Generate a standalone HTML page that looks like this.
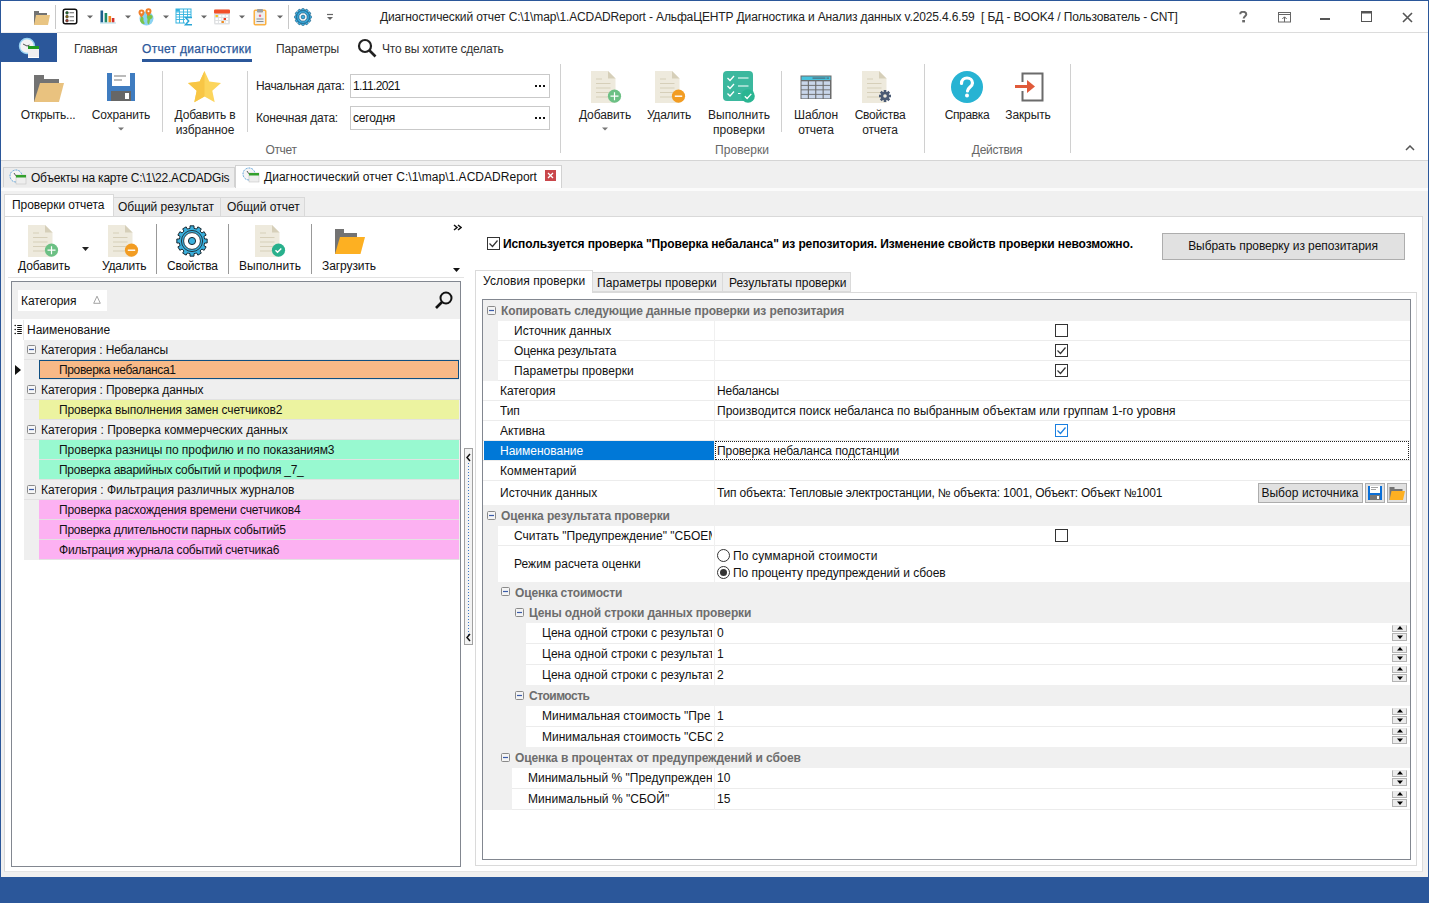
<!DOCTYPE html><html><head><meta charset="utf-8"><style>
html,body{margin:0;padding:0}
body{width:1429px;height:903px;position:relative;overflow:hidden;background:#f0f0f0;font-family:"Liberation Sans",sans-serif;font-size:12px;color:#000}
.t{position:absolute;white-space:nowrap}
div{box-sizing:border-box}
</style></head><body>
<div style="position:absolute;left:0px;top:0px;width:1429px;height:1px;background:#2b579a"></div>
<div style="position:absolute;left:0px;top:0px;width:1px;height:903px;background:#2b579a"></div>
<div style="position:absolute;left:1428px;top:0px;width:1px;height:903px;background:#2b579a"></div>
<div style="position:absolute;left:0px;top:877px;width:1429px;height:26px;background:#2b579a"></div>
<div style="position:absolute;left:1px;top:1px;width:1427px;height:31px;background:#fff"></div>
<div style="position:absolute;left:57px;top:32px;width:1371px;height:1px;background:#dcdcdc"></div>
<div class="t" style="left:380px;top:9px;height:16px;line-height:16px;color:#222;;letter-spacing:-0.133px">Диагностический отчет C:\1\map\1.ACDADReport - АльфаЦЕНТР Диагностика и Анализ данных v.2025.4.6.59&nbsp; [ БД - BOOK4 / Пользователь - CNT]</div>
<svg style="position:absolute;left:33px;top:10px" width="17" height="15" viewBox="0 0 17 15"><path d="M1 1h5v2h8v12H1z" fill="#737373"/><path d="M3 5h14l-2 10H1z" fill="#e9c583"/></svg>
<div style="position:absolute;left:55px;top:5px;width:1px;height:24px;background:#c8c8c8"></div>
<svg style="position:absolute;left:62px;top:8px" width="16" height="17" viewBox="0 0 16 17"><rect x="1.25" y="1.25" width="13.5" height="14.5" rx="2" fill="#fff" stroke="#111" stroke-width="1.5"/><circle cx="5" cy="4.8" r="1.4" fill="#1d6b2c" stroke="#333" stroke-width="0.5"/><circle cx="5" cy="8.7" r="1.4" fill="#8a6d0a" stroke="#333" stroke-width="0.5"/><circle cx="5" cy="12.7" r="1.4" fill="#a33a2a" stroke="#333" stroke-width="0.5"/><path d="M7.5 4.8h4.5M7.5 8.7h4.5M7.5 12.7h4.5" stroke="#666" stroke-width="1.1"/></svg>
<svg style="position:absolute;left:87px;top:15px" width="6" height="4" viewBox="0 0 6 4"><path d="M0 0.5h6L3.0 3.5z" fill="#666"/></svg>
<svg style="position:absolute;left:99px;top:9px" width="18" height="15" viewBox="0 0 18 15"><path d="M1.5 1.5h2.6v12H1.5z" fill="#1d5f8e"/><path d="M5.6 4h2.6v9.5H5.6z" fill="#1f8a67"/><path d="M9.5 7h2.6v6.5H9.5z" fill="#ef8a22"/><path d="M12.8 9h2.6v4.5h-2.6z" fill="#d6302a"/><path d="M1 13.5h16v1H1z" fill="#a8d8e8"/></svg>
<svg style="position:absolute;left:125px;top:15px" width="6" height="4" viewBox="0 0 6 4"><path d="M0 0.5h6L3.0 3.5z" fill="#666"/></svg>
<svg style="position:absolute;left:137px;top:8px" width="18" height="18" viewBox="0 0 18 18"><circle cx="9.5" cy="10.5" r="7" fill="#8ad2f2"/><path d="M4 8.5c1.5-.5 3 1 2.5 3s1.5 2.5 1 4.5c-2 .5-4-1.5-4.5-3.5zM10 5.5c2 1 4 .5 5.5 2.5.5 2-1 3-2.5 3.5-.5 2 0 3.5-1.5 5-1-.5-1.5-3-1-4.5s-1.5-2.5-.5-4z" fill="#7cc44a"/><path d="M4.5 1.5a3 3 0 0 1 3 3c0 2-3 5-3 5s-3-3-3-5a3 3 0 0 1 3-3z" fill="#f07f2a"/><circle cx="4.5" cy="4.5" r="1" fill="#fff"/><path d="M11.5 0.2a3 3 0 0 1 3 3c0 2-3 5-3 5s-3-3-3-5a3 3 0 0 1 3-3z" fill="#f07f2a"/><circle cx="11.5" cy="3.2" r="1" fill="#fff"/></svg>
<svg style="position:absolute;left:163px;top:15px" width="6" height="4" viewBox="0 0 6 4"><path d="M0 0.5h6L3.0 3.5z" fill="#666"/></svg>
<svg style="position:absolute;left:175px;top:8px" width="18" height="18" viewBox="0 0 18 18"><rect x="1" y="1" width="15" height="14" fill="#fff" stroke="#35b4e0" stroke-width="1"/><path d="M1 4h15M1 6.5h15M1 9h15M1 11.5h15M4.5 1v14M8.5 1v14M12.5 1v14" stroke="#35b4e0" stroke-width="0.9"/><rect x="1" y="1" width="3" height="2.6" fill="#35b4e0"/><rect x="10" y="9" width="8" height="9" fill="#fff"/><path d="M17 9.5h-6.5l3.2 3.5-3.2 3.8H17" fill="none" stroke="#2aa6d6" stroke-width="1.5"/></svg>
<svg style="position:absolute;left:201px;top:15px" width="6" height="4" viewBox="0 0 6 4"><path d="M0 0.5h6L3.0 3.5z" fill="#666"/></svg>
<svg style="position:absolute;left:214px;top:9px" width="16" height="16" viewBox="0 0 16 16"><rect x="0" y="0.5" width="16" height="15" rx="1.5" fill="#dfe1e3"/><rect x="0" y="0.5" width="16" height="4" rx="1" fill="#f2502a"/><rect x="1.5" y="6" width="2.4" height="2" fill="#fff"/><rect x="4.9" y="6" width="2.4" height="2" fill="#fff"/><rect x="8.3" y="6" width="2.4" height="2" fill="#fff"/><rect x="11.7" y="6" width="2.4" height="2" fill="#fff"/><rect x="1.5" y="9" width="2.4" height="2" fill="#fff"/><rect x="4.9" y="9" width="2.4" height="2" fill="#fff"/><rect x="8.3" y="9" width="2.4" height="2" fill="#fff"/><rect x="11.7" y="9" width="2.4" height="2" fill="#fff"/><rect x="1.5" y="12" width="2.4" height="2" fill="#fff"/><rect x="4.9" y="12" width="2.4" height="2" fill="#fff"/><rect x="8.3" y="12" width="2.4" height="2" fill="#fff"/><rect x="11.7" y="12" width="2.4" height="2" fill="#fff"/><rect x="1.5" y="6" width="2.4" height="2" fill="#f6c21a"/><rect x="9.6" y="9" width="2.4" height="2" fill="#e8402a"/><rect x="7.5" y="12" width="2.4" height="2" fill="#f08c22"/></svg>
<svg style="position:absolute;left:239px;top:15px" width="6" height="4" viewBox="0 0 6 4"><path d="M0 0.5h6L3.0 3.5z" fill="#666"/></svg>
<svg style="position:absolute;left:253px;top:8px" width="14" height="18" viewBox="0 0 14 18"><rect x="1.25" y="2.25" width="11.5" height="14.5" rx="1" fill="#eeeeee" stroke="#fbb040" stroke-width="1.5"/><rect x="4" y="1" width="6" height="3.5" rx="0.8" fill="#9e9e9e"/><circle cx="7" cy="7.8" r="1.2" fill="#f06080"/><path d="M3.5 11h7M3.5 13.5h7" stroke="#8a8f94" stroke-width="1.2"/></svg>
<svg style="position:absolute;left:277px;top:15px" width="6" height="4" viewBox="0 0 6 4"><path d="M0 0.5h6L3.0 3.5z" fill="#666"/></svg>
<div style="position:absolute;left:288px;top:5px;width:1px;height:24px;background:#c8c8c8"></div>
<svg style="position:absolute;left:294px;top:8px" width="18" height="18" viewBox="0 0 18 18"><g transform="translate(9 9)"><circle cx="0" cy="-7" r="1.6" fill="#3aaee0" stroke="#1c5a80" stroke-width="0.6" transform="rotate(0)"/><circle cx="0" cy="-7" r="1.6" fill="#3aaee0" stroke="#1c5a80" stroke-width="0.6" transform="rotate(30)"/><circle cx="0" cy="-7" r="1.6" fill="#3aaee0" stroke="#1c5a80" stroke-width="0.6" transform="rotate(60)"/><circle cx="0" cy="-7" r="1.6" fill="#3aaee0" stroke="#1c5a80" stroke-width="0.6" transform="rotate(90)"/><circle cx="0" cy="-7" r="1.6" fill="#3aaee0" stroke="#1c5a80" stroke-width="0.6" transform="rotate(120)"/><circle cx="0" cy="-7" r="1.6" fill="#3aaee0" stroke="#1c5a80" stroke-width="0.6" transform="rotate(150)"/><circle cx="0" cy="-7" r="1.6" fill="#3aaee0" stroke="#1c5a80" stroke-width="0.6" transform="rotate(180)"/><circle cx="0" cy="-7" r="1.6" fill="#3aaee0" stroke="#1c5a80" stroke-width="0.6" transform="rotate(210)"/><circle cx="0" cy="-7" r="1.6" fill="#3aaee0" stroke="#1c5a80" stroke-width="0.6" transform="rotate(240)"/><circle cx="0" cy="-7" r="1.6" fill="#3aaee0" stroke="#1c5a80" stroke-width="0.6" transform="rotate(270)"/><circle cx="0" cy="-7" r="1.6" fill="#3aaee0" stroke="#1c5a80" stroke-width="0.6" transform="rotate(300)"/><circle cx="0" cy="-7" r="1.6" fill="#3aaee0" stroke="#1c5a80" stroke-width="0.6" transform="rotate(330)"/><circle r="6.4" fill="#3aaee0" stroke="#1c5a80" stroke-width="0.8"/><circle r="4.2" fill="#fff" stroke="#1c5a80" stroke-width="0.8"/><circle r="1.9" fill="#3aaee0" stroke="#1c5a80" stroke-width="0.7"/></g></svg>
<svg style="position:absolute;left:326px;top:13px" width="8" height="9" viewBox="0 0 8 9"><path d="M1 1.5h6" stroke="#666" stroke-width="1.2"/><path d="M1 4h6L4 7z" fill="#666"/></svg>
<svg style="position:absolute;left:1239px;top:11px" width="9" height="12" viewBox="0 0 9 12"><path d="M1.2 3.2C1.2 1.5 2.6 0.8 4.2 0.8S7.3 1.6 7.3 3.3c0 1.8-2.6 2.2-2.6 4.3" fill="none" stroke="#6a6a6a" stroke-width="2"/><rect x="3.2" y="9" width="2.8" height="2.4" fill="#6a6a6a"/></svg>
<svg style="position:absolute;left:1278px;top:12px" width="13" height="11" viewBox="0 0 13 11"><rect x="0.5" y="0.5" width="12" height="9.5" fill="none" stroke="#666"/><path d="M1 2.5h11" stroke="#666"/><path d="M6.5 10V5M4.3 7l2.2-2.2L8.7 7" fill="none" stroke="#666"/></svg>
<div style="position:absolute;left:1320px;top:18px;width:10px;height:2px;background:#555"></div>
<svg style="position:absolute;left:1361px;top:11px" width="11" height="11" viewBox="0 0 11 11"><rect x="0.5" y="0.5" width="10" height="10" fill="none" stroke="#555"/><path d="M0 1.5h11" stroke="#555" stroke-width="2"/></svg>
<svg style="position:absolute;left:1402px;top:12px" width="11" height="11" viewBox="0 0 11 11"><path d="M1 1l9 9M10 1l-9 9" stroke="#555" stroke-width="1.6"/></svg>
<div style="position:absolute;left:1px;top:33px;width:1427px;height:29px;background:#fff"></div>
<div style="position:absolute;left:1px;top:33px;width:56px;height:29px;background:#2b579a"></div>
<svg style="position:absolute;left:18px;top:37px" width="24" height="22" viewBox="0 0 24 22"><circle cx="9" cy="9" r="7.5" fill="#f4f2f4" stroke="#9ad4f4" stroke-width="1.4"/><path d="M9 9l-4-2M9 9l2.5-1" stroke="#444" stroke-width="0.9"/><rect x="10" y="9" width="11" height="11.5" fill="#f0eef0"/><rect x="10" y="9" width="11" height="3" fill="#1e9a1e"/><path d="M10 20.5h11" stroke="#fff" stroke-width="1"/></svg>
<div class="t" style="left:74px;top:41px;height:16px;line-height:16px;color:#333;letter-spacing:-0.37px">Главная</div>
<div class="t" style="left:142px;top:41px;height:16px;line-height:16px;color:#2b579a;-webkit-text-stroke:0.25px #2b579a;letter-spacing:0.294px">Отчет диагностики</div>
<div style="position:absolute;left:142px;top:59px;width:110px;height:3px;background:#2b579a"></div>
<div class="t" style="left:276px;top:41px;height:16px;line-height:16px;color:#333;letter-spacing:-0.108px">Параметры</div>
<svg style="position:absolute;left:357px;top:38px" width="20" height="20" viewBox="0 0 20 20"><circle cx="8" cy="8" r="6" fill="none" stroke="#222" stroke-width="2.2"/><path d="M12.5 12.5l6 6" stroke="#222" stroke-width="2.6"/></svg>
<div class="t" style="left:382px;top:41px;height:16px;line-height:16px;color:#333;;letter-spacing:-0.214px">Что вы хотите сделать</div>
<div style="position:absolute;left:1px;top:62px;width:1427px;height:98px;background:#fff"></div>
<div style="position:absolute;left:1px;top:160px;width:1427px;height:1px;background:#d5d5d5"></div>
<svg style="position:absolute;left:33px;top:74px" width="32" height="28" viewBox="0 0 32 28"><path d="M1 1h10v4h15v23H1z" fill="#737373"/><path d="M7 9h24l-5 19H1z" fill="#e9c27f"/></svg>
<div class="t" style="left:-52.0px;top:107px;width:200px;text-align:center;height:16px;line-height:16px;color:#222;letter-spacing:-0.254px">Открыть...</div>
<svg style="position:absolute;left:107px;top:73px" width="28" height="28" viewBox="0 0 28 28"><rect x="0" y="0" width="28" height="28" fill="#3f7cc0"/><rect x="5" y="0" width="18" height="13" fill="#fff"/><path d="M7 3h12M7 7h8" stroke="#bbb" stroke-width="2"/><rect x="4" y="18" width="20" height="10" fill="#666"/><rect x="18" y="20" width="4" height="6" fill="#fff"/></svg>
<div class="t" style="left:21.0px;top:107px;width:200px;text-align:center;height:16px;line-height:16px;color:#222;letter-spacing:-0.127px">Сохранить</div>
<svg style="position:absolute;left:118px;top:127px" width="6" height="4" viewBox="0 0 6 4"><path d="M0 0.5h6L3.0 3.5z" fill="#777"/></svg>
<div style="position:absolute;left:162px;top:71px;width:1px;height:61px;background:#d0d0d0"></div>
<svg style="position:absolute;left:188px;top:71px" width="33" height="32" viewBox="0 0 33 32"><path d="M16.5 0l4.8 10.6 11.7 1.3-8.7 7.9 2.4 11.5-10.2-5.9-10.2 5.9 2.4-11.5L0 11.9l11.7-1.3z" fill="#fcd55c"/><path d="M16.5 0l-4.8 10.6L0 11.9l8.7 7.9-2.4 11.5 10.2-5.9z" fill="#f8c645"/></svg>
<div class="t" style="left:105.0px;top:107px;width:200px;text-align:center;height:16px;line-height:16px;color:#222;letter-spacing:-0.195px">Добавить в</div>
<div class="t" style="left:105.0px;top:122px;width:200px;text-align:center;height:16px;line-height:16px;color:#222;letter-spacing:-0.034px">избранное</div>
<div style="position:absolute;left:247px;top:71px;width:1px;height:61px;background:#d0d0d0"></div>
<div class="t" style="left:256px;top:78px;height:16px;line-height:16px;color:#222;;letter-spacing:-0.318px">Начальная дата:</div>
<div class="t" style="left:256px;top:110px;height:16px;line-height:16px;color:#222;;letter-spacing:-0.195px">Конечная дата:</div>
<div style="position:absolute;left:350px;top:74px;width:200px;height:24px;background:#fff;border:1px solid #c9c9c9"></div>
<div style="position:absolute;left:350px;top:106px;width:200px;height:24px;background:#fff;border:1px solid #c9c9c9"></div>
<div class="t" style="left:353px;top:78px;height:16px;line-height:16px;color:#111;letter-spacing:-0.633px">1.11.2021</div>
<div class="t" style="left:353px;top:110px;height:16px;line-height:16px;color:#111;letter-spacing:-0.161px">сегодня</div>
<svg style="position:absolute;left:535px;top:85px" width="11" height="3" viewBox="0 0 11 3"><rect x="0" y="0" width="2" height="2" fill="#111"/><rect x="4" y="0" width="2" height="2" fill="#111"/><rect x="8" y="0" width="2" height="2" fill="#111"/></svg>
<svg style="position:absolute;left:535px;top:117px" width="11" height="3" viewBox="0 0 11 3"><rect x="0" y="0" width="2" height="2" fill="#111"/><rect x="4" y="0" width="2" height="2" fill="#111"/><rect x="8" y="0" width="2" height="2" fill="#111"/></svg>
<div class="t" style="left:181.0px;top:142px;width:200px;text-align:center;height:16px;line-height:16px;color:#666;letter-spacing:-0.332px">Отчет</div>
<div style="position:absolute;left:560px;top:64px;width:1px;height:89px;background:#d0d0d0"></div>
<svg style="position:absolute;left:591px;top:71px" width="31" height="32" viewBox="0 0 31 32"><path d="M0 0h17l7.5 7.5V32H0z" fill="#eeeadd"/><path d="M17 0l7.5 7.5H17z" fill="#d6cfb9"/><path d="M5 8h6M5 12.5h14.5M5 17h14.5M5 21.5h14.5M5 26h14.5" stroke="#d6cfb9" stroke-width="1.2"/><circle cx="23.5" cy="25.2" r="6.6" fill="#6cc084"/><path d="M23.5 21.2v8M19.5 25.2h8" stroke="#fff" stroke-width="1.2"/></svg>
<div class="t" style="left:505.0px;top:107px;width:200px;text-align:center;height:16px;line-height:16px;color:#222;letter-spacing:-0.118px">Добавить</div>
<svg style="position:absolute;left:602px;top:127px" width="6" height="4" viewBox="0 0 6 4"><path d="M0 0.5h6L3.0 3.5z" fill="#777"/></svg>
<svg style="position:absolute;left:655px;top:71px" width="31" height="32" viewBox="0 0 31 32"><path d="M0 0h17l7.5 7.5V32H0z" fill="#eeeadd"/><path d="M17 0l7.5 7.5H17z" fill="#d6cfb9"/><path d="M5 8h6M5 12.5h14.5M5 17h14.5M5 21.5h14.5M5 26h14.5" stroke="#d6cfb9" stroke-width="1.2"/><circle cx="23.5" cy="25.2" r="6.6" fill="#f29c22"/><path d="M19.8 25.2h7.4" stroke="#fff" stroke-width="1.4"/></svg>
<div class="t" style="left:569.0px;top:107px;width:200px;text-align:center;height:16px;line-height:16px;color:#222;letter-spacing:-0.233px">Удалить</div>
<svg style="position:absolute;left:723px;top:71px" width="32" height="32" viewBox="0 0 32 32"><rect x="0" y="0" width="30" height="30" rx="4" fill="#3bb89e"/><path d="M4.5 7l2.5 2.5 4-4.5M4.5 15l2.5 2.5 4-4.5M4.5 22.5l2.5 2.5 4-4.5" fill="none" stroke="#fff" stroke-width="1.3"/><path d="M15 7h10.5M15 15h10.5M15 22.5h2.5" stroke="#fff" stroke-width="1.2"/><circle cx="25" cy="25" r="6.8" fill="#2ab592"/><path d="M21.8 25.2l2.3 2.3 4.2-4.6" fill="none" stroke="#fff" stroke-width="1.3"/></svg>
<div class="t" style="left:639.0px;top:107px;width:200px;text-align:center;height:16px;line-height:16px;color:#222;letter-spacing:0.042px">Выполнить</div>
<div class="t" style="left:639.0px;top:122px;width:200px;text-align:center;height:16px;line-height:16px;color:#222;letter-spacing:0.089px">проверки</div>
<div style="position:absolute;left:781px;top:71px;width:1px;height:61px;background:#d0d0d0"></div>
<svg style="position:absolute;left:800px;top:75px" width="33" height="25" viewBox="0 0 33 25"><rect x="0.5" y="0.5" width="31" height="23.5" fill="#6a6a6a"/><rect x="1.5" y="1.5" width="29" height="3.5" fill="#47c2dc"/><rect x="12.5" y="2.5" width="13" height="1.2" fill="#4b6a7a"/><rect x="26.5" y="2.5" width="2.5" height="1.2" fill="#4b6a7a"/><g fill="#c9d6ea"><rect x="1.5" y="6.3" width="6.3" height="3.6"/><rect x="8.9" y="6.3" width="6.3" height="3.6"/><rect x="16.3" y="6.3" width="6.3" height="3.6"/><rect x="23.700000000000003" y="6.3" width="6.3" height="3.6"/><rect x="1.5" y="10.8" width="6.3" height="3.6"/><rect x="8.9" y="10.8" width="6.3" height="3.6"/><rect x="16.3" y="10.8" width="6.3" height="3.6"/><rect x="23.700000000000003" y="10.8" width="6.3" height="3.6"/><rect x="1.5" y="15.3" width="6.3" height="3.6"/><rect x="8.9" y="15.3" width="6.3" height="3.6"/><rect x="16.3" y="15.3" width="6.3" height="3.6"/><rect x="23.700000000000003" y="15.3" width="6.3" height="3.6"/><rect x="1.5" y="19.8" width="6.3" height="3.6"/><rect x="8.9" y="19.8" width="6.3" height="3.6"/><rect x="16.3" y="19.8" width="6.3" height="3.6"/><rect x="23.700000000000003" y="19.8" width="6.3" height="3.6"/></g></svg>
<div class="t" style="left:716.0px;top:107px;width:200px;text-align:center;height:16px;line-height:16px;color:#222;letter-spacing:-0.076px">Шаблон</div>
<div class="t" style="left:716.0px;top:122px;width:200px;text-align:center;height:16px;line-height:16px;color:#222;letter-spacing:-0.195px">отчета</div>
<svg style="position:absolute;left:862px;top:71px" width="31" height="32" viewBox="0 0 31 32"><path d="M0 0h17l7.5 7.5V32H0z" fill="#eeeadd"/><path d="M17 0l7.5 7.5H17z" fill="#d6cfb9"/><path d="M5 8h6M5 12.5h14.5M5 17h14.5M5 21.5h14.5M5 26h14.5" stroke="#d6cfb9" stroke-width="1.2"/><g transform="translate(23 25)"><rect x="-1.3" y="-6" width="2.6" height="3" fill="#4a5a74" transform="rotate(0)"/><rect x="-1.3" y="-6" width="2.6" height="3" fill="#4a5a74" transform="rotate(45)"/><rect x="-1.3" y="-6" width="2.6" height="3" fill="#4a5a74" transform="rotate(90)"/><rect x="-1.3" y="-6" width="2.6" height="3" fill="#4a5a74" transform="rotate(135)"/><rect x="-1.3" y="-6" width="2.6" height="3" fill="#4a5a74" transform="rotate(180)"/><rect x="-1.3" y="-6" width="2.6" height="3" fill="#4a5a74" transform="rotate(225)"/><rect x="-1.3" y="-6" width="2.6" height="3" fill="#4a5a74" transform="rotate(270)"/><rect x="-1.3" y="-6" width="2.6" height="3" fill="#4a5a74" transform="rotate(315)"/><circle r="4.3" fill="#4a5a74"/><circle r="1.8" fill="#eeeadd"/></g></svg>
<div class="t" style="left:780.0px;top:107px;width:200px;text-align:center;height:16px;line-height:16px;color:#222;letter-spacing:-0.263px">Свойства</div>
<div class="t" style="left:780.0px;top:122px;width:200px;text-align:center;height:16px;line-height:16px;color:#222;letter-spacing:-0.195px">отчета</div>
<div class="t" style="left:642.0px;top:142px;width:200px;text-align:center;height:16px;line-height:16px;color:#666;letter-spacing:0.048px">Проверки</div>
<div style="position:absolute;left:924px;top:64px;width:1px;height:89px;background:#d0d0d0"></div>
<svg style="position:absolute;left:951px;top:71px" width="32" height="32" viewBox="0 0 32 32"><circle cx="16" cy="16" r="16" fill="#27b3d3"/><path d="M10.5 12.5c0-3.5 2.5-5.5 5.5-5.5s5.5 2 5.5 5c0 4-5 4.5-5 8" fill="none" stroke="#fff" stroke-width="3.2" stroke-linecap="round"/><circle cx="16" cy="24.5" r="2" fill="#fff"/></svg>
<div class="t" style="left:867.0px;top:107px;width:200px;text-align:center;height:16px;line-height:16px;color:#222;letter-spacing:-0.34px">Справка</div>
<svg style="position:absolute;left:1014px;top:72px" width="31" height="30" viewBox="0 0 31 30"><path d="M8.5 10V1.5h20v27h-20V19" fill="none" stroke="#6b6b6b" stroke-width="2"/><path d="M1 13h12v-5l8 6.5-8 6.5v-5H1z" fill="#e05a3a"/></svg>
<div class="t" style="left:928.0px;top:107px;width:200px;text-align:center;height:16px;line-height:16px;color:#222;letter-spacing:-0.131px">Закрыть</div>
<div class="t" style="left:897.0px;top:142px;width:200px;text-align:center;height:16px;line-height:16px;color:#666;letter-spacing:-0.285px">Действия</div>
<div style="position:absolute;left:1070px;top:64px;width:1px;height:89px;background:#d0d0d0"></div>
<svg style="position:absolute;left:1405px;top:145px" width="10" height="6" viewBox="0 0 10 6"><path d="M1 5l4-4 4 4" fill="none" stroke="#555" stroke-width="1.5"/></svg>
<div style="position:absolute;left:3px;top:167px;width:232px;height:20px;background:#ececec;border:1px solid #d2d2d2;border-bottom:none"></div>
<svg style="position:absolute;left:9px;top:169px" width="18" height="16" viewBox="0 0 18 16"><circle cx="7" cy="7" r="6" fill="#f5f5f5" stroke="#5aa0d8" stroke-width="1" stroke-dasharray="2 1"/><path d="M7 7l-2-3M7 7h3" stroke="#333" stroke-width="0.8"/><rect x="7" y="6" width="10" height="9" fill="#eee" stroke="#bbb" stroke-width="0.5"/><rect x="7" y="6" width="10" height="2.5" fill="#33a02c"/></svg>
<div class="t" style="left:31px;top:170px;height:16px;line-height:16px;color:#111;;letter-spacing:-0.214px">Объекты на карте C:\1\22.ACDADGis</div>
<div style="position:absolute;left:235px;top:165px;width:327px;height:23px;background:#fff;border:1px solid #d2d2d2;border-bottom:none"></div>
<svg style="position:absolute;left:242px;top:167px" width="18" height="16" viewBox="0 0 18 16"><circle cx="7" cy="7" r="6" fill="#f5f5f5" stroke="#5aa0d8" stroke-width="1" stroke-dasharray="2 1"/><path d="M7 7l-2-3M7 7h3" stroke="#333" stroke-width="0.8"/><rect x="7" y="6" width="10" height="9" fill="#eee" stroke="#bbb" stroke-width="0.5"/><rect x="7" y="6" width="10" height="2.5" fill="#33a02c"/></svg>
<div class="t" style="left:264px;top:169px;height:16px;line-height:16px;color:#111;letter-spacing:0.031px">Диагностический отчет C:\1\map\1.ACDADReport</div>
<svg style="position:absolute;left:545px;top:170px" width="11" height="11" viewBox="0 0 11 11"><rect width="11" height="11" fill="#c9474b"/><path d="M3 3l5 5M8 3l-5 5" stroke="#fff" stroke-width="1.3"/></svg>
<div style="position:absolute;left:1px;top:188px;width:1427px;height:3px;background:#fbfbfb"></div>
<div style="position:absolute;left:4px;top:194px;width:110px;height:23px;background:#fff;border:1px solid #d9d9d9;border-bottom:none"></div>
<div class="t" style="left:12px;top:197px;height:16px;line-height:16px;color:#111;letter-spacing:-0.062px">Проверки отчета</div>
<div style="position:absolute;left:113px;top:197px;width:108px;height:20px;background:#ececec;border:1px solid #d9d9d9;border-bottom:none"></div>
<div class="t" style="left:118px;top:199px;height:16px;line-height:16px;color:#111;letter-spacing:-0.04px">Общий результат</div>
<div style="position:absolute;left:220px;top:197px;width:85px;height:20px;background:#ececec;border:1px solid #d9d9d9;border-bottom:none"></div>
<div class="t" style="left:227px;top:199px;height:16px;line-height:16px;color:#111">Общий отчет</div>
<div style="position:absolute;left:4px;top:216px;width:1419px;height:656px;background:#fff;border-left:1px solid #d9d9d9;border-right:1px solid #dcdcdc;border-bottom:1px solid #e4e4e4"></div>
<div style="position:absolute;left:4px;top:216px;width:1419px;height:1px;background:#d9d9d9"></div>
<svg style="position:absolute;left:28px;top:225px" width="31" height="32" viewBox="0 0 31 32"><path d="M0 0h17l7.5 7.5V32H0z" fill="#eeeadd"/><path d="M17 0l7.5 7.5H17z" fill="#d6cfb9"/><path d="M5 8h6M5 12.5h14.5M5 17h14.5M5 21.5h14.5M5 26h14.5" stroke="#d6cfb9" stroke-width="1.2"/><circle cx="23.5" cy="25.2" r="6.6" fill="#6cc084"/><path d="M23.5 21.2v8M19.5 25.2h8" stroke="#fff" stroke-width="1.2"/></svg>
<div class="t" style="left:18px;top:258px;height:16px;line-height:16px;color:#111;letter-spacing:-0.118px">Добавить</div>
<svg style="position:absolute;left:82px;top:247px" width="7" height="4" viewBox="0 0 7 4"><path d="M0 0h7L3.5 4z" fill="#222"/></svg>
<svg style="position:absolute;left:108px;top:225px" width="31" height="32" viewBox="0 0 31 32"><path d="M0 0h17l7.5 7.5V32H0z" fill="#eeeadd"/><path d="M17 0l7.5 7.5H17z" fill="#d6cfb9"/><path d="M5 8h6M5 12.5h14.5M5 17h14.5M5 21.5h14.5M5 26h14.5" stroke="#d6cfb9" stroke-width="1.2"/><circle cx="23.5" cy="25.2" r="6.6" fill="#f29c22"/><path d="M19.8 25.2h7.4" stroke="#fff" stroke-width="1.4"/></svg>
<div class="t" style="left:102px;top:258px;height:16px;line-height:16px;color:#111;letter-spacing:-0.233px">Удалить</div>
<div style="position:absolute;left:156px;top:224px;width:1px;height:50px;background:#999"></div>
<svg style="position:absolute;left:175px;top:224px" width="34" height="34" viewBox="0 0 34 34"><path d="M15.00 4.36 L15.00 1.83 L19.00 1.83 L19.00 4.36 A12.8 12.8 0 0 1 21.59 5.05 L22.86 2.86 L26.31 4.86 L25.06 7.05 A12.8 12.8 0 0 1 26.95 8.94 L29.14 7.69 L31.14 11.14 L28.95 12.41 A12.8 12.8 0 0 1 29.64 15.00 L32.17 15.00 L32.17 19.00 L29.64 19.00 A12.8 12.8 0 0 1 28.95 21.59 L31.14 22.86 L29.14 26.31 L26.95 25.06 A12.8 12.8 0 0 1 25.06 26.95 L26.31 29.14 L22.86 31.14 L21.59 28.95 A12.8 12.8 0 0 1 19.00 29.64 L19.00 32.17 L15.00 32.17 L15.00 29.64 A12.8 12.8 0 0 1 12.41 28.95 L11.14 31.14 L7.69 29.14 L8.94 26.95 A12.8 12.8 0 0 1 7.05 25.06 L4.86 26.31 L2.86 22.86 L5.05 21.59 A12.8 12.8 0 0 1 4.36 19.00 L1.83 19.00 L1.83 15.00 L4.36 15.00 A12.8 12.8 0 0 1 5.05 12.41 L2.86 11.14 L4.86 7.69 L7.05 8.94 A12.8 12.8 0 0 1 8.94 7.05 L7.69 4.86 L11.14 2.86 L12.41 5.05 A12.8 12.8 0 0 1 15.00 4.36Z" fill="#3ab0dd" stroke="#1b2a33" stroke-width="1"/><circle cx="17" cy="17" r="10.6" fill="none" stroke="#1b2a33" stroke-width="0.9"/><circle cx="17" cy="17" r="8.4" fill="#fff" stroke="#1b2a33" stroke-width="0.9"/><circle cx="17" cy="17" r="3.6" fill="#3ab0dd" stroke="#1b2a33" stroke-width="1"/></svg>
<div class="t" style="left:167px;top:258px;height:16px;line-height:16px;color:#111;letter-spacing:-0.263px">Свойства</div>
<div style="position:absolute;left:228px;top:224px;width:1px;height:50px;background:#999"></div>
<svg style="position:absolute;left:255px;top:225px" width="31" height="32" viewBox="0 0 31 32"><path d="M0 0h17l7.5 7.5V32H0z" fill="#eeeadd"/><path d="M17 0l7.5 7.5H17z" fill="#d6cfb9"/><path d="M5 8h6M5 12.5h14.5M5 17h14.5M5 21.5h14.5M5 26h14.5" stroke="#d6cfb9" stroke-width="1.2"/><circle cx="23.5" cy="25.2" r="6.6" fill="#28b08c"/><path d="M20.5 25.2l2 2 3.8-3.8" fill="none" stroke="#fff" stroke-width="1.4"/></svg>
<div class="t" style="left:239px;top:258px;height:16px;line-height:16px;color:#111;letter-spacing:0.042px">Выполнить</div>
<div style="position:absolute;left:311px;top:224px;width:1px;height:50px;background:#999"></div>
<svg style="position:absolute;left:334px;top:228px" width="32" height="28" viewBox="0 0 32 28"><path d="M1 1h9v4h13v21H1z" fill="#737373"/><path d="M6 9h25l-4.5 17H1z" fill="#fdb022"/></svg>
<div class="t" style="left:322px;top:258px;height:16px;line-height:16px;color:#111;letter-spacing:-0.089px">Загрузить</div>
<svg style="position:absolute;left:453px;top:224px" width="9" height="7" viewBox="0 0 9 7"><path d="M1 1l3 2.5-3 2.5M5 1l3 2.5-3 2.5" fill="none" stroke="#111" stroke-width="1.5"/></svg>
<svg style="position:absolute;left:453px;top:268px" width="7" height="4" viewBox="0 0 7 4"><path d="M0 0h7L3.5 4z" fill="#111"/></svg>
<div style="position:absolute;left:8px;top:277px;width:456px;height:1px;background:#e3e3e3"></div>
<div style="position:absolute;left:11px;top:281px;width:450px;height:586px;background:#fff;border:1px solid #828790"></div>
<div style="position:absolute;left:12px;top:282px;width:448px;height:37px;background:#efefef"></div>
<div style="position:absolute;left:18px;top:290px;width:89px;height:21px;background:#fff"></div>
<div class="t" style="left:21px;top:293px;height:16px;line-height:16px;color:#111;letter-spacing:-0.079px">Категория</div>
<svg style="position:absolute;left:93px;top:295px" width="8" height="9" viewBox="0 0 8 9"><path d="M4 1.2L7.3 8.3H0.7z" fill="none" stroke="#9a9a9a" stroke-width="0.9"/></svg>
<svg style="position:absolute;left:435px;top:291px" width="18" height="18" viewBox="0 0 18 18"><circle cx="11" cy="7" r="5.5" fill="none" stroke="#111" stroke-width="2"/><path d="M7 11l-6 6" stroke="#111" stroke-width="2.6"/></svg>
<div style="position:absolute;left:12px;top:320px;width:448px;height:20px;background:#fff"></div>
<svg style="position:absolute;left:14px;top:324px" width="9" height="11" viewBox="0 0 9 11"><circle cx="1.2" cy="1.5" r="0.8" fill="#111"/><circle cx="1.2" cy="5.5" r="0.8" fill="#111"/><circle cx="1.2" cy="9.5" r="0.8" fill="#111"/><path d="M3.2 1.5h4.6M3.2 3.5h4.6M3.2 5.5h4.6M3.2 7.5h4.6M3.2 9.5h4.6" stroke="#111" stroke-width="1"/></svg>
<div style="position:absolute;left:23px;top:320px;width:1px;height:20px;background:#e8e8e8"></div>
<div class="t" style="left:27px;top:322px;height:16px;line-height:16px;color:#111;letter-spacing:0.001px">Наименование</div>
<div style="position:absolute;left:24px;top:340px;width:436px;height:20px;background:#efefef"></div>
<div style="position:absolute;left:24px;top:359px;width:436px;height:1px;background:#e2e2e2"></div>
<svg style="position:absolute;left:27px;top:345px" width="9" height="9" viewBox="0 0 9 9"><rect x="0.5" y="0.5" width="8" height="8" rx="1" fill="#f6f6f6" stroke="#8a8a8a" stroke-width="1"/><path d="M2 4.5h5" stroke="#3b5ba8" stroke-width="1.2"/></svg>
<div class="t" style="left:41px;top:342px;height:16px;line-height:16px;color:#111;letter-spacing:-0.12px">Категория : Небалансы</div>
<div style="position:absolute;left:24px;top:360px;width:15px;height:20px;background:#efefef"></div>
<div style="position:absolute;left:459px;top:360px;width:1px;height:20px;background:#efefef"></div>
<div style="position:absolute;left:39px;top:360px;width:420px;height:20px;background:#f8b987"></div>
<div style="position:absolute;left:39px;top:379px;width:420px;height:1px;background:#e2e2e2"></div>
<div class="t" style="left:59px;top:362px;height:16px;line-height:16px;color:#111;letter-spacing:-0.346px">Проверка небаланса1</div>
<div style="position:absolute;left:24px;top:380px;width:436px;height:20px;background:#efefef"></div>
<div style="position:absolute;left:24px;top:399px;width:436px;height:1px;background:#e2e2e2"></div>
<svg style="position:absolute;left:27px;top:385px" width="9" height="9" viewBox="0 0 9 9"><rect x="0.5" y="0.5" width="8" height="8" rx="1" fill="#f6f6f6" stroke="#8a8a8a" stroke-width="1"/><path d="M2 4.5h5" stroke="#3b5ba8" stroke-width="1.2"/></svg>
<div class="t" style="left:41px;top:382px;height:16px;line-height:16px;color:#111;letter-spacing:-0.087px">Категория : Проверка данных</div>
<div style="position:absolute;left:24px;top:400px;width:15px;height:20px;background:#efefef"></div>
<div style="position:absolute;left:459px;top:400px;width:1px;height:20px;background:#efefef"></div>
<div style="position:absolute;left:39px;top:400px;width:420px;height:20px;background:#ecf3a0"></div>
<div style="position:absolute;left:39px;top:419px;width:420px;height:1px;background:#e2e2e2"></div>
<div class="t" style="left:59px;top:402px;height:16px;line-height:16px;color:#111;letter-spacing:-0.116px">Проверка выполнения замен счетчиков2</div>
<div style="position:absolute;left:24px;top:420px;width:436px;height:20px;background:#efefef"></div>
<div style="position:absolute;left:24px;top:439px;width:436px;height:1px;background:#e2e2e2"></div>
<svg style="position:absolute;left:27px;top:425px" width="9" height="9" viewBox="0 0 9 9"><rect x="0.5" y="0.5" width="8" height="8" rx="1" fill="#f6f6f6" stroke="#8a8a8a" stroke-width="1"/><path d="M2 4.5h5" stroke="#3b5ba8" stroke-width="1.2"/></svg>
<div class="t" style="left:41px;top:422px;height:16px;line-height:16px;color:#111;letter-spacing:0.003px">Категория : Проверка коммерческих данных</div>
<div style="position:absolute;left:24px;top:440px;width:15px;height:20px;background:#efefef"></div>
<div style="position:absolute;left:459px;top:440px;width:1px;height:20px;background:#efefef"></div>
<div style="position:absolute;left:39px;top:440px;width:420px;height:20px;background:#98f9d0"></div>
<div style="position:absolute;left:39px;top:459px;width:420px;height:1px;background:#e2e2e2"></div>
<div class="t" style="left:59px;top:442px;height:16px;line-height:16px;color:#111;letter-spacing:-0.08px">Проверка разницы по профилю и по показаниям3</div>
<div style="position:absolute;left:24px;top:460px;width:15px;height:20px;background:#efefef"></div>
<div style="position:absolute;left:459px;top:460px;width:1px;height:20px;background:#efefef"></div>
<div style="position:absolute;left:39px;top:460px;width:420px;height:20px;background:#98f9d0"></div>
<div style="position:absolute;left:39px;top:479px;width:420px;height:1px;background:#e2e2e2"></div>
<div class="t" style="left:59px;top:462px;height:16px;line-height:16px;color:#111;letter-spacing:-0.268px">Проверка аварийных событий и профиля _7_</div>
<div style="position:absolute;left:24px;top:480px;width:436px;height:20px;background:#efefef"></div>
<div style="position:absolute;left:24px;top:499px;width:436px;height:1px;background:#e2e2e2"></div>
<svg style="position:absolute;left:27px;top:485px" width="9" height="9" viewBox="0 0 9 9"><rect x="0.5" y="0.5" width="8" height="8" rx="1" fill="#f6f6f6" stroke="#8a8a8a" stroke-width="1"/><path d="M2 4.5h5" stroke="#3b5ba8" stroke-width="1.2"/></svg>
<div class="t" style="left:41px;top:482px;height:16px;line-height:16px;color:#111;letter-spacing:-0.008px">Категория : Фильтрация различных журналов</div>
<div style="position:absolute;left:24px;top:500px;width:15px;height:20px;background:#efefef"></div>
<div style="position:absolute;left:459px;top:500px;width:1px;height:20px;background:#efefef"></div>
<div style="position:absolute;left:39px;top:500px;width:420px;height:20px;background:#fcb1f2"></div>
<div style="position:absolute;left:39px;top:519px;width:420px;height:1px;background:#e2e2e2"></div>
<div class="t" style="left:59px;top:502px;height:16px;line-height:16px;color:#111;letter-spacing:-0.138px">Проверка расхождения времени счетчиков4</div>
<div style="position:absolute;left:24px;top:520px;width:15px;height:20px;background:#efefef"></div>
<div style="position:absolute;left:459px;top:520px;width:1px;height:20px;background:#efefef"></div>
<div style="position:absolute;left:39px;top:520px;width:420px;height:20px;background:#fcb1f2"></div>
<div style="position:absolute;left:39px;top:539px;width:420px;height:1px;background:#e2e2e2"></div>
<div class="t" style="left:59px;top:522px;height:16px;line-height:16px;color:#111;letter-spacing:-0.247px">Проверка длительности парных событий5</div>
<div style="position:absolute;left:24px;top:540px;width:15px;height:20px;background:#efefef"></div>
<div style="position:absolute;left:459px;top:540px;width:1px;height:20px;background:#efefef"></div>
<div style="position:absolute;left:39px;top:540px;width:420px;height:20px;background:#fcb1f2"></div>
<div style="position:absolute;left:39px;top:559px;width:420px;height:1px;background:#e2e2e2"></div>
<div class="t" style="left:59px;top:542px;height:16px;line-height:16px;color:#111;letter-spacing:-0.207px">Фильтрация журнала событий счетчика6</div>
<div style="position:absolute;left:39px;top:360px;width:420px;height:19px;border:1px solid #0f4f82"></div>
<svg style="position:absolute;left:15px;top:365px" width="6" height="10" viewBox="0 0 6 10"><path d="M0 0l6 5-6 5z" fill="#111"/></svg>
<div style="position:absolute;left:464px;top:448px;width:9px;height:197px;border:1px solid #a0a0a0;background:#f3f3f3"></div>
<svg style="position:absolute;left:465px;top:450px" width="7" height="194" viewBox="0 0 7 194"><path d="M5 4l-3 3.5 3 3.5" fill="none" stroke="#111" stroke-width="1.5"/><path d="M3.5 13v172" stroke="#3a78c8" stroke-width="1" stroke-dasharray="1 2"/><path d="M5 184l-3 3.5 3 3.5" fill="none" stroke="#111" stroke-width="1.5"/></svg>
<svg style="position:absolute;left:487px;top:237px" width="13" height="13" viewBox="0 0 13 13"><rect x="0.5" y="0.5" width="12" height="12" fill="#fff" stroke="#333"/><path d="M2.5 6.5l3 3 5-6" fill="none" stroke="#333" stroke-width="1.2"/></svg>
<div class="t" style="left:503px;top:236px;height:16px;line-height:16px;font-weight:bold;color:#000;;letter-spacing:-0.099px">Используется проверка "Проверка небаланса" из репозитория. Изменение свойств проверки невозможно.</div>
<div style="position:absolute;left:1162px;top:233px;width:243px;height:27px;background:#e1e1e1;border:1px solid #adadad"></div>
<div class="t" style="left:1163.0px;top:238px;width:240px;text-align:center;height:16px;line-height:16px;color:#111;letter-spacing:-0.07px">Выбрать проверку из репозитария</div>
<div style="position:absolute;left:475px;top:292px;width:942px;height:574px;border:1px solid #dadada;background:#fff"></div>
<div style="position:absolute;left:475px;top:270px;width:118px;height:23px;background:#fff;border:1px solid #dadada;border-bottom:none"></div>
<div class="t" style="left:483px;top:273px;height:16px;line-height:16px;color:#111;letter-spacing:0.079px">Условия проверки</div>
<div style="position:absolute;left:592px;top:272px;width:131px;height:20px;background:#ececec;border:1px solid #dadada"></div>
<div class="t" style="left:597px;top:275px;height:16px;line-height:16px;color:#111;letter-spacing:0.067px">Параметры проверки</div>
<div style="position:absolute;left:722px;top:272px;width:129px;height:20px;background:#ececec;border:1px solid #dadada"></div>
<div class="t" style="left:729px;top:275px;height:16px;line-height:16px;color:#111;letter-spacing:-0.022px">Результаты проверки</div>
<div style="position:absolute;left:476px;top:292px;width:116px;height:1px;background:#fff"></div>
<div style="position:absolute;left:482px;top:299px;width:929px;height:561px;border:1px solid #828790;background:#fff"></div>
<div style="position:absolute;left:483px;top:300px;width:927px;height:21px;background:#f0f0f0"></div>
<svg style="position:absolute;left:487px;top:306px" width="9" height="9" viewBox="0 0 9 9"><rect x="0.5" y="0.5" width="8" height="8" rx="1" fill="#f4f4f4" stroke="#8a8a8a" stroke-width="1"/><path d="M2 4.5h5" stroke="#3b5ba8" stroke-width="1.2"/></svg>
<div class="t" style="left:501px;top:303px;height:16px;line-height:16px;font-weight:bold;color:#6d6d6d;;letter-spacing:-0.114px">Копировать следующие данные проверки из репозитария</div>
<div style="position:absolute;left:483px;top:321px;width:15px;height:20px;background:#f0f0f0"></div>
<div style="position:absolute;left:498px;top:321px;width:912px;height:20px;background:#fff"></div>
<div style="position:absolute;left:498px;top:340px;width:912px;height:1px;background:#ececec"></div>
<div style="position:absolute;left:714px;top:321px;width:1px;height:20px;background:#f0f0f0"></div>
<div class="t" style="left:514px;top:323px;height:16px;line-height:16px;color:#111;width:198px;overflow:hidden;letter-spacing:0.085px">Источник данных</div>
<svg style="position:absolute;left:1055px;top:324px" width="13" height="13" viewBox="0 0 13 13"><rect x="0.5" y="0.5" width="12" height="12" fill="#fff" stroke="#333"/></svg>
<div style="position:absolute;left:483px;top:341px;width:15px;height:20px;background:#f0f0f0"></div>
<div style="position:absolute;left:498px;top:341px;width:912px;height:20px;background:#fff"></div>
<div style="position:absolute;left:498px;top:360px;width:912px;height:1px;background:#ececec"></div>
<div style="position:absolute;left:714px;top:341px;width:1px;height:20px;background:#f0f0f0"></div>
<div class="t" style="left:514px;top:343px;height:16px;line-height:16px;color:#111;width:198px;overflow:hidden;letter-spacing:-0.172px">Оценка результата</div>
<svg style="position:absolute;left:1055px;top:344px" width="13" height="13" viewBox="0 0 13 13"><rect x="0.5" y="0.5" width="12" height="12" fill="#fff" stroke="#333"/><path d="M2.5 6.5l3 3 5-6" fill="none" stroke="#333" stroke-width="1.2"/></svg>
<div style="position:absolute;left:483px;top:361px;width:15px;height:20px;background:#f0f0f0"></div>
<div style="position:absolute;left:498px;top:361px;width:912px;height:20px;background:#fff"></div>
<div style="position:absolute;left:498px;top:380px;width:912px;height:1px;background:#ececec"></div>
<div style="position:absolute;left:714px;top:361px;width:1px;height:20px;background:#f0f0f0"></div>
<div class="t" style="left:514px;top:363px;height:16px;line-height:16px;color:#111;width:198px;overflow:hidden;letter-spacing:0.067px">Параметры проверки</div>
<svg style="position:absolute;left:1055px;top:364px" width="13" height="13" viewBox="0 0 13 13"><rect x="0.5" y="0.5" width="12" height="12" fill="#fff" stroke="#333"/><path d="M2.5 6.5l3 3 5-6" fill="none" stroke="#333" stroke-width="1.2"/></svg>
<div style="position:absolute;left:483px;top:381px;width:0px;height:20px;background:#f0f0f0"></div>
<div style="position:absolute;left:483px;top:381px;width:927px;height:20px;background:#fff"></div>
<div style="position:absolute;left:483px;top:400px;width:927px;height:1px;background:#ececec"></div>
<div style="position:absolute;left:714px;top:381px;width:1px;height:20px;background:#f0f0f0"></div>
<div class="t" style="left:500px;top:383px;height:16px;line-height:16px;color:#111;width:212px;overflow:hidden;letter-spacing:-0.079px">Категория</div>
<div class="t" style="left:717px;top:383px;height:16px;line-height:16px;color:#111;;letter-spacing:-0.156px">Небалансы</div>
<div style="position:absolute;left:483px;top:401px;width:0px;height:20px;background:#f0f0f0"></div>
<div style="position:absolute;left:483px;top:401px;width:927px;height:20px;background:#fff"></div>
<div style="position:absolute;left:483px;top:420px;width:927px;height:1px;background:#ececec"></div>
<div style="position:absolute;left:714px;top:401px;width:1px;height:20px;background:#f0f0f0"></div>
<div class="t" style="left:500px;top:403px;height:16px;line-height:16px;color:#111;width:212px;overflow:hidden;letter-spacing:-0.072px">Тип</div>
<div class="t" style="left:717px;top:403px;height:16px;line-height:16px;color:#111;;letter-spacing:0.037px">Производится поиск небаланса по выбранным объектам или группам 1-го уровня</div>
<div style="position:absolute;left:483px;top:421px;width:0px;height:20px;background:#f0f0f0"></div>
<div style="position:absolute;left:483px;top:421px;width:927px;height:20px;background:#fff"></div>
<div style="position:absolute;left:483px;top:440px;width:927px;height:1px;background:#ececec"></div>
<div style="position:absolute;left:714px;top:421px;width:1px;height:20px;background:#f0f0f0"></div>
<div class="t" style="left:500px;top:423px;height:16px;line-height:16px;color:#111;width:212px;overflow:hidden;letter-spacing:-0.038px">Активна</div>
<svg style="position:absolute;left:1055px;top:424px" width="13" height="13" viewBox="0 0 13 13"><rect x="0.5" y="0.5" width="12" height="12" fill="#fff" stroke="#1a7fe0"/><path d="M2.5 6.5l3 3 5-6" fill="none" stroke="#1a7fe0" stroke-width="1.2"/></svg>
<div style="position:absolute;left:483px;top:441px;width:0px;height:20px;background:#f0f0f0"></div>
<div style="position:absolute;left:483px;top:441px;width:927px;height:20px;background:#fff"></div>
<div style="position:absolute;left:483px;top:460px;width:927px;height:1px;background:#ececec"></div>
<div style="position:absolute;left:714px;top:441px;width:1px;height:20px;background:#f0f0f0"></div>
<div style="position:absolute;left:484px;top:441px;width:230px;height:19px;background:#0078d7"></div>
<div class="t" style="left:500px;top:443px;height:16px;line-height:16px;color:#fff;letter-spacing:0.001px">Наименование</div>
<div style="position:absolute;left:715px;top:441px;width:694px;height:19px;border:1px dotted #222"></div>
<div class="t" style="left:717px;top:443px;height:16px;line-height:16px;color:#111;letter-spacing:-0.086px">Проверка небаланса подстанции</div>
<div style="position:absolute;left:483px;top:461px;width:0px;height:20px;background:#f0f0f0"></div>
<div style="position:absolute;left:483px;top:461px;width:927px;height:20px;background:#fff"></div>
<div style="position:absolute;left:483px;top:480px;width:927px;height:1px;background:#ececec"></div>
<div style="position:absolute;left:714px;top:461px;width:1px;height:20px;background:#f0f0f0"></div>
<div class="t" style="left:500px;top:463px;height:16px;line-height:16px;color:#111;width:212px;overflow:hidden;letter-spacing:0.091px">Комментарий</div>
<div style="position:absolute;left:483px;top:481px;width:0px;height:24px;background:#f0f0f0"></div>
<div style="position:absolute;left:483px;top:481px;width:927px;height:24px;background:#fff"></div>
<div style="position:absolute;left:714px;top:481px;width:1px;height:24px;background:#f0f0f0"></div>
<div class="t" style="left:500px;top:485px;height:16px;line-height:16px;color:#111;width:212px;overflow:hidden;letter-spacing:0.085px">Источник данных</div>
<div class="t" style="left:717px;top:485px;height:16px;line-height:16px;color:#111;;letter-spacing:-0.211px">Тип объекта: Тепловые электростанции, № объекта: 1001, Объект: Объект №1001</div>
<div style="position:absolute;left:1258px;top:483px;width:105px;height:20px;background:#e1e1e1;border:1px solid #adadad"></div>
<div class="t" style="left:1258.0px;top:485px;width:104px;text-align:center;height:16px;line-height:16px;color:#111;letter-spacing:0.051px">Выбор источника</div>
<div style="position:absolute;left:1365px;top:483px;width:20px;height:20px;background:#e1e1e1;border:1px solid #adadad"></div>
<svg style="position:absolute;left:1368px;top:486px" width="14" height="14" viewBox="0 0 14 14"><rect x="0" y="0" width="14" height="14" fill="#0a6fd8"/><rect x="2" y="0" width="10" height="7" fill="#fff"/><path d="M3 1.5h7M3 3.5h5" stroke="#999" stroke-width="0.9"/><rect x="2" y="9" width="10" height="5" fill="#777"/><rect x="9" y="10" width="2" height="3" fill="#fff"/></svg>
<div style="position:absolute;left:1387px;top:483px;width:20px;height:20px;background:#e1e1e1;border:1px solid #adadad"></div>
<svg style="position:absolute;left:1389px;top:486px" width="16" height="14" viewBox="0 0 16 14"><path d="M0.5 1h5v2h8v11H0.5z" fill="#737373"/><path d="M2.5 5h13.5l-2 9H0.5z" fill="#fdb022"/></svg>
<div style="position:absolute;left:483px;top:505px;width:927px;height:21px;background:#f0f0f0"></div>
<svg style="position:absolute;left:487px;top:511px" width="9" height="9" viewBox="0 0 9 9"><rect x="0.5" y="0.5" width="8" height="8" rx="1" fill="#f4f4f4" stroke="#8a8a8a" stroke-width="1"/><path d="M2 4.5h5" stroke="#3b5ba8" stroke-width="1.2"/></svg>
<div class="t" style="left:501px;top:508px;height:16px;line-height:16px;font-weight:bold;color:#6d6d6d;;letter-spacing:-0.109px">Оценка результата проверки</div>
<div style="position:absolute;left:483px;top:526px;width:15px;height:20px;background:#f0f0f0"></div>
<div style="position:absolute;left:498px;top:526px;width:912px;height:20px;background:#fff"></div>
<div style="position:absolute;left:498px;top:545px;width:912px;height:1px;background:#ececec"></div>
<div style="position:absolute;left:714px;top:526px;width:1px;height:20px;background:#f0f0f0"></div>
<div class="t" style="left:514px;top:528px;height:16px;line-height:16px;color:#111;width:198px;overflow:hidden">Считать "Предупреждение" "СБОЕМ</div>
<svg style="position:absolute;left:1055px;top:529px" width="13" height="13" viewBox="0 0 13 13"><rect x="0.5" y="0.5" width="12" height="12" fill="#fff" stroke="#333"/></svg>
<div style="position:absolute;left:483px;top:546px;width:15px;height:36px;background:#f0f0f0"></div>
<div style="position:absolute;left:498px;top:546px;width:912px;height:36px;background:#fff"></div>
<div style="position:absolute;left:714px;top:546px;width:1px;height:36px;background:#f0f0f0"></div>
<div class="t" style="left:514px;top:556px;height:16px;line-height:16px;color:#111;width:198px;overflow:hidden;letter-spacing:0.03px">Режим расчета оценки</div>
<svg style="position:absolute;left:717px;top:549px" width="13" height="13" viewBox="0 0 13 13"><circle cx="6.5" cy="6.5" r="6" fill="#fff" stroke="#333"/></svg>
<svg style="position:absolute;left:717px;top:566px" width="13" height="13" viewBox="0 0 13 13"><circle cx="6.5" cy="6.5" r="6" fill="#fff" stroke="#333"/><circle cx="6.5" cy="6.5" r="3.5" fill="#333"/></svg>
<div class="t" style="left:733px;top:548px;height:16px;line-height:16px;color:#111;letter-spacing:0.134px">По суммарной стоимости</div>
<div class="t" style="left:733px;top:565px;height:16px;line-height:16px;color:#111;letter-spacing:-0.023px">По проценту предупреждений и сбоев</div>
<div style="position:absolute;left:483px;top:582px;width:927px;height:20px;background:#f0f0f0"></div>
<svg style="position:absolute;left:501px;top:587px" width="9" height="9" viewBox="0 0 9 9"><rect x="0.5" y="0.5" width="8" height="8" rx="1" fill="#f4f4f4" stroke="#8a8a8a" stroke-width="1"/><path d="M2 4.5h5" stroke="#3b5ba8" stroke-width="1.2"/></svg>
<div class="t" style="left:515px;top:585px;height:16px;line-height:16px;font-weight:bold;color:#6d6d6d;;letter-spacing:-0.149px">Оценка стоимости</div>
<div style="position:absolute;left:483px;top:602px;width:927px;height:21px;background:#f0f0f0"></div>
<svg style="position:absolute;left:515px;top:608px" width="9" height="9" viewBox="0 0 9 9"><rect x="0.5" y="0.5" width="8" height="8" rx="1" fill="#f4f4f4" stroke="#8a8a8a" stroke-width="1"/><path d="M2 4.5h5" stroke="#3b5ba8" stroke-width="1.2"/></svg>
<div class="t" style="left:529px;top:605px;height:16px;line-height:16px;font-weight:bold;color:#6d6d6d;;letter-spacing:-0.112px">Цены одной строки данных проверки</div>
<div style="position:absolute;left:483px;top:623px;width:43px;height:21px;background:#f0f0f0"></div>
<div style="position:absolute;left:526px;top:623px;width:884px;height:21px;background:#fff"></div>
<div style="position:absolute;left:526px;top:643px;width:884px;height:1px;background:#ececec"></div>
<div style="position:absolute;left:714px;top:623px;width:1px;height:21px;background:#f0f0f0"></div>
<div class="t" style="left:542px;top:625px;height:16px;line-height:16px;color:#111;width:170px;overflow:hidden">Цена одной строки с результат</div>
<div class="t" style="left:717px;top:625px;height:16px;line-height:16px;color:#111;">0</div>
<div style="position:absolute;left:1392px;top:625px;width:15px;height:7px;background:#ececec;border:1px solid #b4b4b4;border-top-color:#e6e6e6"></div>
<div style="position:absolute;left:1392px;top:633px;width:15px;height:8px;background:#ececec;border:1px solid #b4b4b4"></div>
<svg style="position:absolute;left:1397px;top:626px" width="6" height="4" viewBox="0 0 6 4"><path d="M0 3.5h6L3 0z" fill="#000"/></svg>
<svg style="position:absolute;left:1397px;top:635px" width="6" height="4" viewBox="0 0 6 4"><path d="M0 0.5h6L3 4z" fill="#000"/></svg>
<div style="position:absolute;left:483px;top:644px;width:43px;height:21px;background:#f0f0f0"></div>
<div style="position:absolute;left:526px;top:644px;width:884px;height:21px;background:#fff"></div>
<div style="position:absolute;left:526px;top:664px;width:884px;height:1px;background:#ececec"></div>
<div style="position:absolute;left:714px;top:644px;width:1px;height:21px;background:#f0f0f0"></div>
<div class="t" style="left:542px;top:646px;height:16px;line-height:16px;color:#111;width:170px;overflow:hidden">Цена одной строки с результат</div>
<div class="t" style="left:717px;top:646px;height:16px;line-height:16px;color:#111;">1</div>
<div style="position:absolute;left:1392px;top:646px;width:15px;height:7px;background:#ececec;border:1px solid #b4b4b4;border-top-color:#e6e6e6"></div>
<div style="position:absolute;left:1392px;top:654px;width:15px;height:8px;background:#ececec;border:1px solid #b4b4b4"></div>
<svg style="position:absolute;left:1397px;top:647px" width="6" height="4" viewBox="0 0 6 4"><path d="M0 3.5h6L3 0z" fill="#000"/></svg>
<svg style="position:absolute;left:1397px;top:656px" width="6" height="4" viewBox="0 0 6 4"><path d="M0 0.5h6L3 4z" fill="#000"/></svg>
<div style="position:absolute;left:483px;top:665px;width:43px;height:20px;background:#f0f0f0"></div>
<div style="position:absolute;left:526px;top:665px;width:884px;height:20px;background:#fff"></div>
<div style="position:absolute;left:714px;top:665px;width:1px;height:20px;background:#f0f0f0"></div>
<div class="t" style="left:542px;top:667px;height:16px;line-height:16px;color:#111;width:170px;overflow:hidden">Цена одной строки с результат</div>
<div class="t" style="left:717px;top:667px;height:16px;line-height:16px;color:#111;">2</div>
<div style="position:absolute;left:1392px;top:666px;width:15px;height:7px;background:#ececec;border:1px solid #b4b4b4;border-top-color:#e6e6e6"></div>
<div style="position:absolute;left:1392px;top:674px;width:15px;height:8px;background:#ececec;border:1px solid #b4b4b4"></div>
<svg style="position:absolute;left:1397px;top:667px" width="6" height="4" viewBox="0 0 6 4"><path d="M0 3.5h6L3 0z" fill="#000"/></svg>
<svg style="position:absolute;left:1397px;top:676px" width="6" height="4" viewBox="0 0 6 4"><path d="M0 0.5h6L3 4z" fill="#000"/></svg>
<div style="position:absolute;left:483px;top:685px;width:927px;height:21px;background:#f0f0f0"></div>
<svg style="position:absolute;left:515px;top:691px" width="9" height="9" viewBox="0 0 9 9"><rect x="0.5" y="0.5" width="8" height="8" rx="1" fill="#f4f4f4" stroke="#8a8a8a" stroke-width="1"/><path d="M2 4.5h5" stroke="#3b5ba8" stroke-width="1.2"/></svg>
<div class="t" style="left:529px;top:688px;height:16px;line-height:16px;font-weight:bold;color:#6d6d6d;;letter-spacing:-0.491px">Стоимость</div>
<div style="position:absolute;left:483px;top:706px;width:43px;height:21px;background:#f0f0f0"></div>
<div style="position:absolute;left:526px;top:706px;width:884px;height:21px;background:#fff"></div>
<div style="position:absolute;left:526px;top:726px;width:884px;height:1px;background:#ececec"></div>
<div style="position:absolute;left:714px;top:706px;width:1px;height:21px;background:#f0f0f0"></div>
<div class="t" style="left:542px;top:708px;height:16px;line-height:16px;color:#111;width:170px;overflow:hidden">Минимальная стоимость "Пре</div>
<div class="t" style="left:717px;top:708px;height:16px;line-height:16px;color:#111;">1</div>
<div style="position:absolute;left:1392px;top:708px;width:15px;height:7px;background:#ececec;border:1px solid #b4b4b4;border-top-color:#e6e6e6"></div>
<div style="position:absolute;left:1392px;top:716px;width:15px;height:8px;background:#ececec;border:1px solid #b4b4b4"></div>
<svg style="position:absolute;left:1397px;top:709px" width="6" height="4" viewBox="0 0 6 4"><path d="M0 3.5h6L3 0z" fill="#000"/></svg>
<svg style="position:absolute;left:1397px;top:718px" width="6" height="4" viewBox="0 0 6 4"><path d="M0 0.5h6L3 4z" fill="#000"/></svg>
<div style="position:absolute;left:483px;top:727px;width:43px;height:20px;background:#f0f0f0"></div>
<div style="position:absolute;left:526px;top:727px;width:884px;height:20px;background:#fff"></div>
<div style="position:absolute;left:714px;top:727px;width:1px;height:20px;background:#f0f0f0"></div>
<div class="t" style="left:542px;top:729px;height:16px;line-height:16px;color:#111;width:170px;overflow:hidden">Минимальная стоимость "СБС</div>
<div class="t" style="left:717px;top:729px;height:16px;line-height:16px;color:#111;">2</div>
<div style="position:absolute;left:1392px;top:728px;width:15px;height:7px;background:#ececec;border:1px solid #b4b4b4;border-top-color:#e6e6e6"></div>
<div style="position:absolute;left:1392px;top:736px;width:15px;height:8px;background:#ececec;border:1px solid #b4b4b4"></div>
<svg style="position:absolute;left:1397px;top:729px" width="6" height="4" viewBox="0 0 6 4"><path d="M0 3.5h6L3 0z" fill="#000"/></svg>
<svg style="position:absolute;left:1397px;top:738px" width="6" height="4" viewBox="0 0 6 4"><path d="M0 0.5h6L3 4z" fill="#000"/></svg>
<div style="position:absolute;left:483px;top:747px;width:927px;height:21px;background:#f0f0f0"></div>
<svg style="position:absolute;left:501px;top:753px" width="9" height="9" viewBox="0 0 9 9"><rect x="0.5" y="0.5" width="8" height="8" rx="1" fill="#f4f4f4" stroke="#8a8a8a" stroke-width="1"/><path d="M2 4.5h5" stroke="#3b5ba8" stroke-width="1.2"/></svg>
<div class="t" style="left:515px;top:750px;height:16px;line-height:16px;font-weight:bold;color:#6d6d6d;;letter-spacing:-0.103px">Оценка в процентах от предупреждений и сбоев</div>
<div style="position:absolute;left:483px;top:768px;width:29px;height:21px;background:#f0f0f0"></div>
<div style="position:absolute;left:512px;top:768px;width:898px;height:21px;background:#fff"></div>
<div style="position:absolute;left:512px;top:788px;width:898px;height:1px;background:#ececec"></div>
<div style="position:absolute;left:714px;top:768px;width:1px;height:21px;background:#f0f0f0"></div>
<div class="t" style="left:528px;top:770px;height:16px;line-height:16px;color:#111;width:184px;overflow:hidden">Минимальный % "Предупрежден</div>
<div class="t" style="left:717px;top:770px;height:16px;line-height:16px;color:#111;">10</div>
<div style="position:absolute;left:1392px;top:770px;width:15px;height:7px;background:#ececec;border:1px solid #b4b4b4;border-top-color:#e6e6e6"></div>
<div style="position:absolute;left:1392px;top:778px;width:15px;height:8px;background:#ececec;border:1px solid #b4b4b4"></div>
<svg style="position:absolute;left:1397px;top:771px" width="6" height="4" viewBox="0 0 6 4"><path d="M0 3.5h6L3 0z" fill="#000"/></svg>
<svg style="position:absolute;left:1397px;top:780px" width="6" height="4" viewBox="0 0 6 4"><path d="M0 0.5h6L3 4z" fill="#000"/></svg>
<div style="position:absolute;left:483px;top:789px;width:29px;height:21px;background:#f0f0f0"></div>
<div style="position:absolute;left:512px;top:789px;width:898px;height:21px;background:#fff"></div>
<div style="position:absolute;left:512px;top:809px;width:898px;height:1px;background:#ececec"></div>
<div style="position:absolute;left:714px;top:789px;width:1px;height:21px;background:#f0f0f0"></div>
<div class="t" style="left:528px;top:791px;height:16px;line-height:16px;color:#111;width:184px;overflow:hidden;letter-spacing:0.04px">Минимальный % "СБОЙ"</div>
<div class="t" style="left:717px;top:791px;height:16px;line-height:16px;color:#111;">15</div>
<div style="position:absolute;left:1392px;top:791px;width:15px;height:7px;background:#ececec;border:1px solid #b4b4b4;border-top-color:#e6e6e6"></div>
<div style="position:absolute;left:1392px;top:799px;width:15px;height:8px;background:#ececec;border:1px solid #b4b4b4"></div>
<svg style="position:absolute;left:1397px;top:792px" width="6" height="4" viewBox="0 0 6 4"><path d="M0 3.5h6L3 0z" fill="#000"/></svg>
<svg style="position:absolute;left:1397px;top:801px" width="6" height="4" viewBox="0 0 6 4"><path d="M0 0.5h6L3 4z" fill="#000"/></svg>
</body></html>
